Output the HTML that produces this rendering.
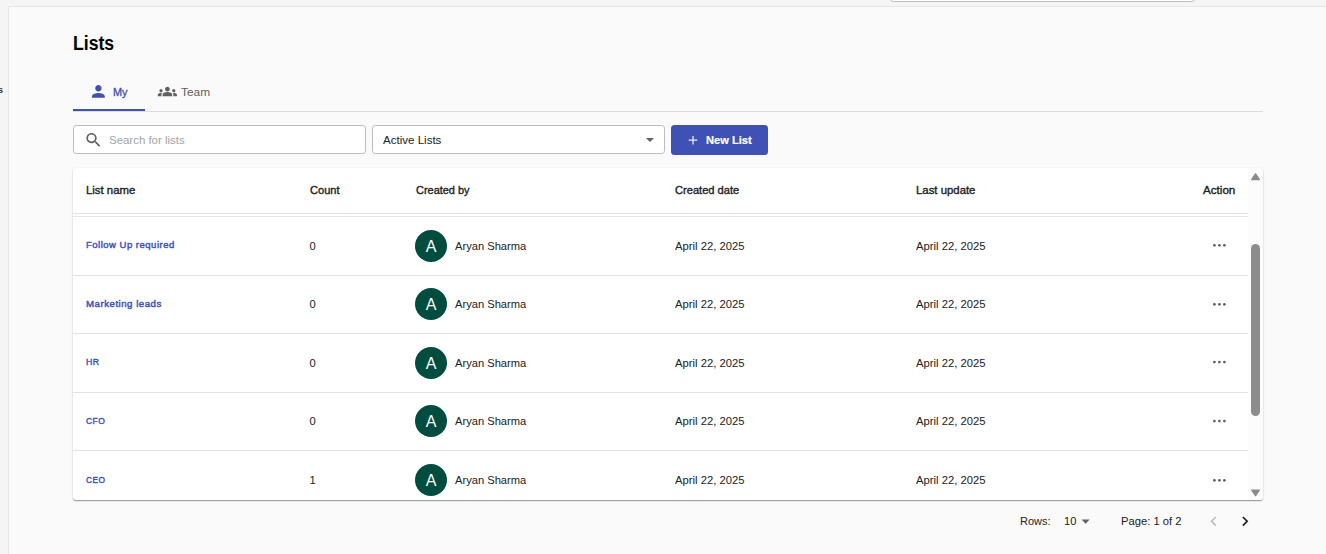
<!DOCTYPE html>
<html lang="en">
<head>
<meta charset="utf-8">
<title>Lists</title>
<style>
*{box-sizing:border-box;margin:0;padding:0}
html,body{width:1326px;height:554px;overflow:hidden}
body{background:#f5f5f5;font-family:"Liberation Sans",Arial,sans-serif;color:#212121;position:relative}
.abs{position:absolute}
.t{position:absolute;white-space:nowrap;line-height:20px;height:20px;transform-origin:0 0}
#main{position:absolute;left:8px;top:6px;width:1330px;height:560px;background:#fafafa;border:1px solid #e6e6e6;border-radius:1px 0 0 0}
#topbox{position:absolute;left:890px;top:-10px;width:305px;height:12px;border:1px solid #bdbdbd;border-radius:3.200px;background:#fff}
#side{position:absolute;left:-2px;top:85.300px;font-size:9px;font-weight:bold;color:#333;line-height:10px}
#tabline{position:absolute;left:73px;top:111px;width:1190px;height:1px;background:#dcdcdc}
#tabind{position:absolute;left:73px;top:109px;width:72px;height:2px;background:#3f51b5}
#search{position:absolute;left:73px;top:125px;width:293px;height:29px;border:1px solid #bdbdbd;border-radius:3.200px;background:#fff}
#select{position:absolute;left:372px;top:125px;width:293px;height:29px;border:1px solid #bdbdbd;border-radius:3.200px;background:#fff}
#btn{position:absolute;left:671px;top:125px;width:97px;height:30px;border-radius:3.500px;background:#3f51b5}
#table{position:absolute;left:73px;top:168px;width:1190px;height:332px;background:#fff;border-radius:3.200px;box-shadow:0 1px 1px rgba(0,0,0,.36),0 1px 3px rgba(0,0,0,.08),0 0 1px rgba(0,0,0,.10);overflow:hidden}
.hl{position:absolute;left:0;width:1175px;height:1px;background:#e2e2e2}
.av{position:absolute;left:415px;width:32px;height:32px;border-radius:50%;background:#004d40;color:#fff;font-size:16px;text-align:center;line-height:34.200px}
.dots{position:absolute;left:1210px;width:20px;height:10px}
</style>
</head>
<body>
<div id="topbox"></div>
<div id="side">s</div>
<div id="main"></div>

<!-- tabs -->
<div id="tabline"></div>
<div id="tabind"></div>
<svg class="abs" style="left:88px;top:81px" width="21" height="21" viewBox="0 0 21 21"><g transform="translate(0.800 0.800) scale(0.80000 0.80000)"><path fill="#3f51b5" d="M12 12c2.210 0 4-1.790 4-4s-1.790-4-4-4-4 1.790-4 4 1.790 4 4 4zm0 2c-2.670 0-8 1.340-8 4v2h16v-2c0-2.660-5.330-4-8-4z"/></g></svg>
<svg class="abs" style="left:157px;top:81px" width="22" height="22" viewBox="0 0 22 22"><g transform="translate(0.800 0.900) scale(0.80000 0.80000)"><path fill="#616161" d="M12 12.750c1.630 0 3.070.390 4.240.900 1.080.480 1.760 1.560 1.760 2.730V18H6v-1.610c0-1.180.680-2.260 1.760-2.730 1.170-.520 2.610-.910 4.240-.910zM4 13c1.100 0 2-.900 2-2s-.900-2-2-2-2 .900-2 2 .900 2 2 2zm1.130 1.100c-.370-.060-.740-.100-1.130-.100-.990 0-1.930.210-2.780.580C.480 14.900 0 15.620 0 16.430V18h4.500v-1.610c0-.830.230-1.610.630-2.290zM20 13c1.100 0 2-.900 2-2s-.900-2-2-2-2 .900-2 2 .900 2 2 2zm4 3.430c0-.810-.480-1.530-1.220-1.850-.850-.370-1.790-.580-2.780-.580-.390 0-.760.040-1.130.100.400.680.630 1.460.630 2.290V18H24v-1.570zM12 6c1.660 0 3 1.340 3 3s-1.340 3-3 3-3-1.340-3-3 1.340-3 3-3z"/></g></svg>

<!-- search / select / button -->
<div id="search">
  <svg class="abs" style="left:10px;top:4px" width="20" height="21" viewBox="0 0 20 21"><g transform="translate(0.000 0.500) scale(0.79167 0.79167)"><path fill="#616161" d="M15.500 14h-.790l-.280-.270C15.410 12.590 16 11.110 16 9.500 16 5.910 13.090 3 9.500 3S3 5.910 3 9.500 5.910 16 9.500 16c1.610 0 3.090-.590 4.230-1.570l.270.280v.790l5 4.990L20.490 19l-4.990-5zm-6 0C7.010 14 5 11.990 5 9.500S7.010 5 9.500 5 14 7.010 14 9.500 11.990 14 9.500 14z"/></g></svg>
</div>
<div id="select">
  <svg class="abs" style="left:273px;top:12px" width="8" height="4" viewBox="0 0 10 5"><path fill="#616161" d="M0 0h10L5 5z"/></svg>
</div>
<div id="btn">
  <svg class="abs" style="left:17px;top:10px" width="11" height="11" viewBox="0 0 11 11"><g transform="translate(0.700 0.900) scale(0.61429 0.61429)"><path fill="#fff" fill-opacity=".92" d="M6 0h2v6h6v2H8v6H6V8H0V6h6z"/></g></svg>
</div>

<!-- table -->
<div id="table">
  <div class="hl" style="top:45px"></div>
  <div class="hl" style="top:48px;background:#e6e6e6"></div>
  <div class="hl" style="top:107px"></div>
  <div class="hl" style="top:165px"></div>
  <div class="hl" style="top:224px"></div>
  <div class="hl" style="top:282px"></div>
  <!-- scrollbar -->
  <div class="abs" style="left:1175px;top:0;width:15px;height:332px;background:#fcfcfc"></div>
  <svg class="abs" style="left:1178px;top:4px" width="11" height="10" viewBox="0 0 11 10"><g transform="translate(0.000 0.800) scale(1.00000 1.00000)"><path fill="#8b8b8b" stroke="#8b8b8b" stroke-width="1.400" stroke-linejoin="round" d="M4.550 1.200L8.300 6.700H0.800z"/></g></svg>
  <div class="abs" style="left:1178px;top:76px;width:9px;height:172px;border-radius:4.500px;background:#8c8c8c"></div>
  <svg class="abs" style="left:1178px;top:320px" width="11" height="10" viewBox="0 0 11 10"><g transform="translate(0.000 0.900) scale(1.00000 1.00000)"><path fill="#8b8b8b" stroke="#8b8b8b" stroke-width="1.400" stroke-linejoin="round" d="M0.800 1.300H8.300L4.550 6.800z"/></g></svg>
</div>

<!-- avatars & action dots -->
<div class="av" style="top:229.700px">A</div>
<div class="av" style="top:288.200px">A</div>
<div class="av" style="top:346.700px">A</div>
<div class="av" style="top:405.200px">A</div>
<div class="av" style="top:463.700px">A</div>

<svg class="dots" style="top:240px" viewBox="0 0 20 10"><g fill="#616161"><circle cx="4.400" cy="5.3" r="1.400"/><circle cx="9.400" cy="5.3" r="1.400"/><circle cx="14.400" cy="5.3" r="1.400"/></g></svg>
<svg class="dots" style="top:299px" viewBox="0 0 20 10"><g fill="#616161"><circle cx="4.400" cy="5.3" r="1.400"/><circle cx="9.400" cy="5.3" r="1.400"/><circle cx="14.400" cy="5.3" r="1.400"/></g></svg>
<svg class="dots" style="top:357px" viewBox="0 0 20 10"><g fill="#616161"><circle cx="4.400" cy="5.05" r="1.400"/><circle cx="9.400" cy="5.05" r="1.400"/><circle cx="14.400" cy="5.05" r="1.400"/></g></svg>
<svg class="dots" style="top:416px" viewBox="0 0 20 10"><g fill="#616161"><circle cx="4.400" cy="5.1" r="1.400"/><circle cx="9.400" cy="5.1" r="1.400"/><circle cx="14.400" cy="5.1" r="1.400"/></g></svg>
<svg class="dots" style="top:475px" viewBox="0 0 20 10"><g fill="#616161"><circle cx="4.400" cy="5.3" r="1.400"/><circle cx="9.400" cy="5.3" r="1.400"/><circle cx="14.400" cy="5.3" r="1.400"/></g></svg>

<!-- footer icons -->
<svg class="abs" style="left:1081px;top:519px" width="10" height="6" viewBox="0 0 10 6"><g transform="translate(0.600 0.400) scale(0.80000 0.88000)"><path fill="#616161" d="M0 0h10L5 5z"/></g></svg>
<svg class="abs" style="left:1203px;top:511px" width="22" height="22" viewBox="0 0 22 22"><g transform="translate(0.840 0.550) scale(0.81667 0.81667)"><path fill="#bdbdbd" d="M15.410 7.410L14 6l-6 6 6 6 1.410-1.410L10.830 12z"/></g></svg>
<svg class="abs" style="left:1235px;top:511px" width="21" height="22" viewBox="0 0 21 22"><g transform="translate(0.250 0.550) scale(0.81667 0.81667)"><path fill="#1a1a1a" d="M10 6L8.590 7.410 13.170 12l-4.580 4.590L10 18l6-6z"/></g></svg>

<!-- texts -->
<div class="t" style="left:72.70px;top:28.0px;line-height:30px;height:30px;font-size:19.5px;font-weight:bold;color:#000;transform:scaleX(0.9045);">Lists</div>
<div class="t" style="left:112.97px;top:81.0px;line-height:21px;height:21px;font-size:11.6px;font-weight:normal;-webkit-text-stroke:0.35px currentColor;color:#3f51b5;transform:scaleX(0.9433);">My</div>
<div class="t" style="left:181.00px;top:82.0px;line-height:20px;height:20px;font-size:11.5px;font-weight:normal;color:#5f5f5f;transform:scaleX(1.0348);">Team</div>
<div class="t" style="left:109.40px;top:130.0px;line-height:20px;height:20px;font-size:11.2px;font-weight:normal;color:#a3a3a3;transform:scaleX(1.0230);">Search for lists</div>
<div class="t" style="left:383.20px;top:130.0px;line-height:20px;height:20px;font-size:11.2px;font-weight:normal;color:#212121;transform:scaleX(1.0319);">Active Lists</div>
<div class="t" style="left:705.80px;top:130.0px;line-height:20px;height:20px;font-size:11.2px;font-weight:bold;color:#fff;transform:scaleX(0.9940);-webkit-text-stroke:0.2px #fff;">New List</div>
<div class="t" style="left:85.88px;top:180.0px;line-height:20px;height:20px;font-size:10.8px;font-weight:normal;-webkit-text-stroke:0.35px currentColor;color:#1c1c1c;transform:scaleX(1.0540);">List name</div>
<div class="t" style="left:309.88px;top:180.0px;line-height:20px;height:20px;font-size:10.8px;font-weight:normal;-webkit-text-stroke:0.35px currentColor;color:#1c1c1c;transform:scaleX(1.0253);">Count</div>
<div class="t" style="left:415.68px;top:180.0px;line-height:20px;height:20px;font-size:10.8px;font-weight:normal;-webkit-text-stroke:0.35px currentColor;color:#1c1c1c;transform:scaleX(1.0137);">Created by</div>
<div class="t" style="left:674.98px;top:180.0px;line-height:20px;height:20px;font-size:10.8px;font-weight:normal;-webkit-text-stroke:0.35px currentColor;color:#1c1c1c;transform:scaleX(1.0292);">Created date</div>
<div class="t" style="left:915.88px;top:180.0px;line-height:20px;height:20px;font-size:10.8px;font-weight:normal;-webkit-text-stroke:0.35px currentColor;color:#1c1c1c;transform:scaleX(1.0533);">Last update</div>
<div class="t" style="left:1202.59px;top:180.0px;line-height:20px;height:20px;font-size:10.8px;font-weight:normal;-webkit-text-stroke:0.35px currentColor;color:#1c1c1c;transform:scaleX(1.0773);">Action</div>
<div class="t" style="left:86.02px;top:235.0px;line-height:19px;height:19px;font-size:9.9px;font-weight:normal;-webkit-text-stroke:0.45px currentColor;letter-spacing:0.5px;color:#3f51b5;transform:scaleX(0.9657);">Follow Up required</div>
<div class="t" style="left:309.50px;top:236.0px;line-height:20px;height:20px;font-size:11.2px;font-weight:normal;color:#212121;transform:scaleX(1.0000);">0</div>
<div class="t" style="left:455.45px;top:236.0px;line-height:20px;height:20px;font-size:11.2px;font-weight:normal;color:#212121;transform:scaleX(0.9968);">Aryan Sharma</div>
<div class="t" style="left:674.90px;top:236.0px;line-height:20px;height:20px;font-size:11.2px;font-weight:normal;color:#212121;transform:scaleX(1.0056);">April 22, 2025</div>
<div class="t" style="left:915.90px;top:236.0px;line-height:20px;height:20px;font-size:11.2px;font-weight:normal;color:#212121;transform:scaleX(1.0056);">April 22, 2025</div>
<div class="t" style="left:86.02px;top:294.0px;line-height:19px;height:19px;font-size:9.9px;font-weight:normal;-webkit-text-stroke:0.45px currentColor;letter-spacing:0.5px;color:#3f51b5;transform:scaleX(0.9816);">Marketing leads</div>
<div class="t" style="left:309.50px;top:294.0px;line-height:20px;height:20px;font-size:11.2px;font-weight:normal;color:#212121;transform:scaleX(1.0000);">0</div>
<div class="t" style="left:455.45px;top:294.0px;line-height:20px;height:20px;font-size:11.2px;font-weight:normal;color:#212121;transform:scaleX(0.9968);">Aryan Sharma</div>
<div class="t" style="left:674.90px;top:294.0px;line-height:20px;height:20px;font-size:11.2px;font-weight:normal;color:#212121;transform:scaleX(1.0056);">April 22, 2025</div>
<div class="t" style="left:915.90px;top:294.0px;line-height:20px;height:20px;font-size:11.2px;font-weight:normal;color:#212121;transform:scaleX(1.0056);">April 22, 2025</div>
<div class="t" style="left:86.00px;top:352.0px;line-height:19px;height:19px;font-size:9.9px;font-weight:normal;-webkit-text-stroke:0.45px currentColor;letter-spacing:0.5px;color:#3f51b5;transform:scaleX(0.8885);">HR</div>
<div class="t" style="left:309.50px;top:353.0px;line-height:20px;height:20px;font-size:11.2px;font-weight:normal;color:#212121;transform:scaleX(1.0000);">0</div>
<div class="t" style="left:455.45px;top:353.0px;line-height:20px;height:20px;font-size:11.2px;font-weight:normal;color:#212121;transform:scaleX(0.9968);">Aryan Sharma</div>
<div class="t" style="left:674.90px;top:353.0px;line-height:20px;height:20px;font-size:11.2px;font-weight:normal;color:#212121;transform:scaleX(1.0056);">April 22, 2025</div>
<div class="t" style="left:915.90px;top:353.0px;line-height:20px;height:20px;font-size:11.2px;font-weight:normal;color:#212121;transform:scaleX(1.0056);">April 22, 2025</div>
<div class="t" style="left:85.99px;top:411.0px;line-height:19px;height:19px;font-size:9.9px;font-weight:normal;-webkit-text-stroke:0.45px currentColor;letter-spacing:0.5px;color:#3f51b5;transform:scaleX(0.8623);">CFO</div>
<div class="t" style="left:309.50px;top:411.0px;line-height:20px;height:20px;font-size:11.2px;font-weight:normal;color:#212121;transform:scaleX(1.0000);">0</div>
<div class="t" style="left:455.45px;top:411.0px;line-height:20px;height:20px;font-size:11.2px;font-weight:normal;color:#212121;transform:scaleX(0.9968);">Aryan Sharma</div>
<div class="t" style="left:674.90px;top:411.0px;line-height:20px;height:20px;font-size:11.2px;font-weight:normal;color:#212121;transform:scaleX(1.0056);">April 22, 2025</div>
<div class="t" style="left:915.90px;top:411.0px;line-height:20px;height:20px;font-size:11.2px;font-weight:normal;color:#212121;transform:scaleX(1.0056);">April 22, 2025</div>
<div class="t" style="left:85.99px;top:470.0px;line-height:19px;height:19px;font-size:9.9px;font-weight:normal;-webkit-text-stroke:0.45px currentColor;letter-spacing:0.5px;color:#3f51b5;transform:scaleX(0.8417);">CEO</div>
<div class="t" style="left:309.50px;top:470.0px;line-height:20px;height:20px;font-size:11.2px;font-weight:normal;color:#212121;transform:scaleX(1.0000);">1</div>
<div class="t" style="left:455.45px;top:470.0px;line-height:20px;height:20px;font-size:11.2px;font-weight:normal;color:#212121;transform:scaleX(0.9968);">Aryan Sharma</div>
<div class="t" style="left:674.90px;top:470.0px;line-height:20px;height:20px;font-size:11.2px;font-weight:normal;color:#212121;transform:scaleX(1.0056);">April 22, 2025</div>
<div class="t" style="left:915.90px;top:470.0px;line-height:20px;height:20px;font-size:11.2px;font-weight:normal;color:#212121;transform:scaleX(1.0056);">April 22, 2025</div>
<div class="t" style="left:1019.80px;top:511.0px;line-height:20px;height:20px;font-size:11.2px;font-weight:normal;color:#212121;transform:scaleX(0.9847);">Rows:</div>
<div class="t" style="left:1063.90px;top:511.0px;line-height:20px;height:20px;font-size:11.2px;font-weight:normal;color:#212121;transform:scaleX(0.9900);">10</div>
<div class="t" style="left:1121.20px;top:511.0px;line-height:20px;height:20px;font-size:11.2px;font-weight:normal;color:#212121;transform:scaleX(1.0031);">Page: 1 of 2</div>
</body>
</html>
